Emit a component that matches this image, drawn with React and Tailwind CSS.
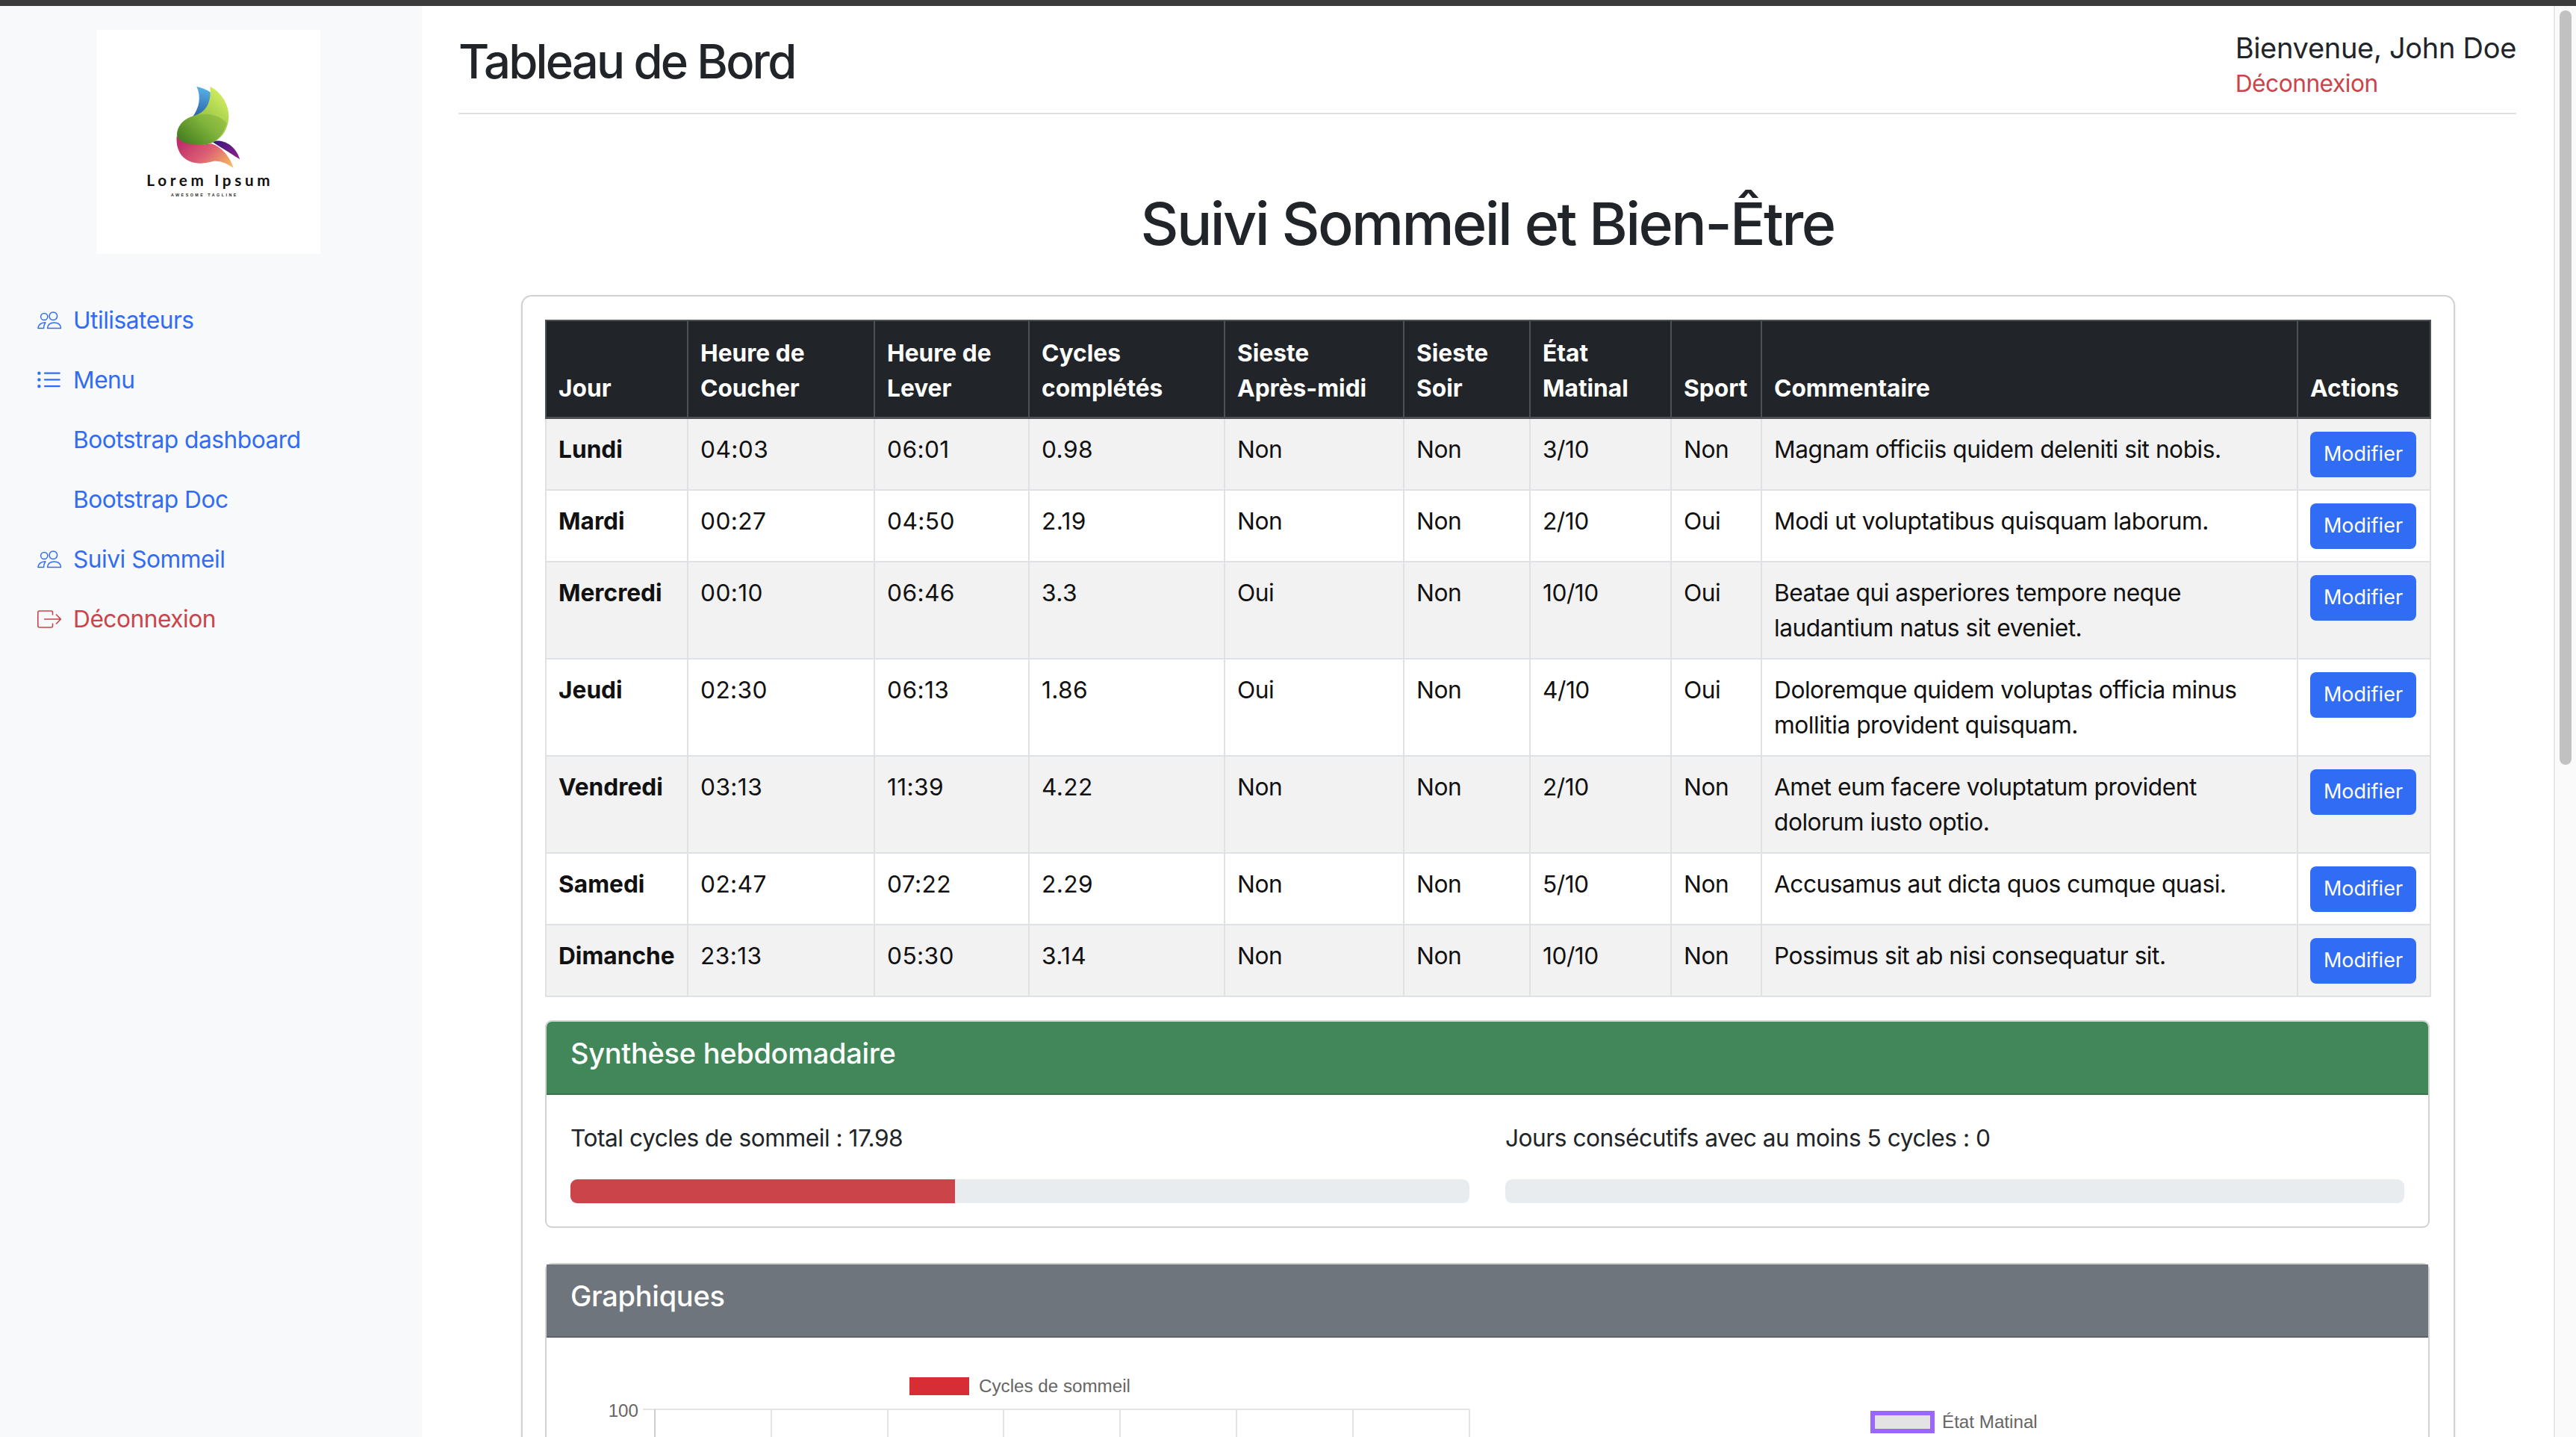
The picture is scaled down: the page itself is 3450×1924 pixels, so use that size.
import { BsListUl } from "react-icons/bs";

function PeopleIcon() {
  return (
    <svg viewBox="0 0 32 24" className="h-[24px] w-[32px]" fill="none" stroke="currentColor" strokeWidth="1.5">
      <circle cx="21.3" cy="6.2" r="5.3" />
      <circle cx="9.2" cy="7" r="4.6" />
      <path d="M13.6 22.6C14 17.6 17 15 22.6 15C28 15 31.2 17.6 31.6 22.6Z" strokeLinejoin="round" />
      <path d="M0.9 22.6C1.5 17.6 4.6 15 10.8 14.8C9.2 17 8.6 19.6 8.6 22.6Z" strokeLinejoin="round" />
    </svg>
  );
}

function LogoutIcon() {
  return (
    <svg viewBox="0 0 32 24" className="h-[24px] w-[32px]" fill="none" stroke="currentColor" strokeWidth="1.6">
      <path d="M20.5 6.5V3a2 2 0 0 0-2-2H2.8a2 2 0 0 0-2 2V21a2 2 0 0 0 2 2H18.500a2 2 0 0 0 2-2V17.500" />
      <path d="M9 12H31M25 5.500L31.300 12L25 18.500" />
    </svg>
  );
}

function ListIcon() {
  return <BsListUl size={35} className="-ml-[2px]" />;
}

const navItems = [
  { name: "Utilisateurs", icon: PeopleIcon },
  { name: "Menu", icon: ListIcon },
  { name: "Bootstrap dashboard" },
  { name: "Bootstrap Doc" },
  { name: "Suivi Sommeil", icon: PeopleIcon },
  { name: "Déconnexion", icon: LogoutIcon, danger: true },
];

const columns = [
  { label: ["Jour"], width: "w-[190px]" },
  { label: ["Heure de", "Coucher"], width: "w-[250px]" },
  { label: ["Heure de", "Lever"], width: "w-[207px]" },
  { label: ["Cycles", "complétés"], width: "w-[262px]" },
  { label: ["Sieste", "Après-midi"], width: "w-[240px]" },
  { label: ["Sieste", "Soir"], width: "w-[169px]" },
  { label: ["État", "Matinal"], width: "w-[189px]" },
  { label: ["Sport"], width: "w-[121px]" },
  { label: ["Commentaire"], width: "w-[718px]" },
  { label: ["Actions"], width: "w-[178px]" },
];

const rows = [
  ["Lundi", "04:03", "06:01", "0.98", "Non", "Non", "3/10", "Non", "Magnam officiis quidem deleniti sit nobis."],
  ["Mardi", "00:27", "04:50", "2.19", "Non", "Non", "2/10", "Oui", "Modi ut voluptatibus quisquam laborum."],
  ["Mercredi", "00:10", "06:46", "3.3", "Oui", "Non", "10/10", "Oui", "Beatae qui asperiores tempore neque laudantium natus sit eveniet."],
  ["Jeudi", "02:30", "06:13", "1.86", "Oui", "Non", "4/10", "Oui", "Doloremque quidem voluptas officia minus mollitia provident quisquam."],
  ["Vendredi", "03:13", "11:39", "4.22", "Non", "Non", "2/10", "Non", "Amet eum facere voluptatum provident dolorum iusto optio."],
  ["Samedi", "02:47", "07:22", "2.29", "Non", "Non", "5/10", "Non", "Accusamus aut dicta quos cumque quasi."],
  ["Dimanche", "23:13", "05:30", "3.14", "Non", "Non", "10/10", "Non", "Possimus sit ab nisi consequatur sit."],
];

function Logo() {
  return (
    <svg viewBox="27 30 900 900" className="h-[300px] w-[300px] bg-white">
      <defs>
        <linearGradient id="blue" x1="0.5" y1="0" x2="0.4" y2="1">
          <stop offset="0" stopColor="#5ab2e8" />
          <stop offset="1" stopColor="#2a62a6" />
        </linearGradient>
        <linearGradient id="green" x1="0.85" y1="0.1" x2="0.15" y2="0.95">
          <stop offset="0" stopColor="#d0ec60" />
          <stop offset="0.55" stopColor="#93c144" />
          <stop offset="1" stopColor="#477f22" />
        </linearGradient>
        <linearGradient id="pink" x1="0" y1="0.3" x2="1" y2="0.9">
          <stop offset="0" stopColor="#bf2d6b" />
          <stop offset="0.5" stopColor="#dd5f74" />
          <stop offset="1" stopColor="#f6bd5f" />
        </linearGradient>
        <linearGradient id="purple" x1="0" y1="0" x2="1" y2="1">
          <stop offset="0" stopColor="#35187c" />
          <stop offset="1" stopColor="#93208c" />
        </linearGradient>
      </defs>
      <path d="M430 258C450 262 472 270 487 282L484 335C465 362 440 372 413 380C440 345 450 300 430 258Z" fill="url(#blue)" />
      <path d="M490 478C535 468 585 490 604 550C575 532 550 515 520 497Z" fill="url(#purple)" />
      <path d="M350 457C375 485 440 495 490 487C530 500 565 540 578 585C545 560 510 550 480 562C440 572 395 565 370 535C352 510 348 485 350 457Z" fill="url(#pink)" />
      <path d="M484 258C530 280 560 330 559 380C556 440 520 480 470 490C420 495 365 490 351 455C350 415 380 385 420 375C470 360 490 320 484 258Z" fill="url(#green)" />
      <path d="M420 375C450 368 510 358 551 405C535 450 510 478 470 490C420 495 365 490 351 455C350 415 380 385 420 375Z" fill="#4c8a22" opacity="0.25" />
      <text x="229" y="656" fontFamily="Lato, sans-serif" fontWeight="700" fontSize="62" letterSpacing="14" fill="#111">Lorem Ipsum</text>
      <text x="327" y="698" fontFamily="'Liberation Sans', sans-serif" fontWeight="700" fontSize="16" letterSpacing="7.5" fill="#222">AWESOME TAGLINE</text>
    </svg>
  );
}

function Sidebar() {
  return (
    <aside className="h-full w-[565px] shrink-0 bg-[#f8f9fa]">
      <div className="pb-[49px] pl-[129px] pt-[32px]">
        <Logo />
      </div>
      <nav className="flex flex-col">
        {navItems.map((item) => (
          <a
            key={item.name}
            href="#"
            className={`flex h-[80px] items-center pl-[50px] text-[31.68px] tracking-[-0.48px] ${item.danger ? "text-[#cb444a]" : "text-[#316cf4]"}`}
          >
            <span className="flex w-[48px] shrink-0 items-center">{item.icon ? <item.icon /> : null}</span>
            {item.name}
          </a>
        ))}
      </nav>
    </aside>
  );
}

function cellClass(j) {
  if (j === 0) return "font-bold";
  if (j <= 3) return "tracking-[0.4px]";
  return "tracking-[-0.48px]";
}

function SleepTable() {
  return (
    <table className="w-[2524px] table-fixed border-collapse text-[31.68px] leading-[47.5px] text-[#111]">
      <colgroup>
        {columns.map((c) => (
          <col key={c.label.join(" ")} className={c.width} />
        ))}
      </colgroup>
      <thead className="bg-[#212529] text-white">
        <tr className="h-[130px]">
          {columns.map((c) => (
            <th key={c.label.join(" ")} className="border-2 border-b-[3px] border-[#4d5154] px-[16px] pb-[14px] pt-[15px] text-left align-bottom font-bold">
              {c.label.map((line) => (
                <div key={line}>{line}</div>
              ))}
            </th>
          ))}
        </tr>
      </thead>
      <tbody>
        {rows.map((row, i) => (
          <tr key={row[0]} className={i % 2 === 0 ? "bg-[#f2f2f2]" : "bg-white"}>
            {row.map((cell, j) => (
              <td key={j} className={`border-2 border-[#dee2e6] px-[16px] pb-[16px] pt-[17px] align-top ${cellClass(j)}`}>
                {cell}
              </td>
            ))}
            <td className="border-2 border-[#dee2e6] px-[16px] pb-[16px] pt-[17px] align-top">
              <button className="flex h-[61px] w-[142px] items-center justify-center rounded-[8px] bg-[#316cf4] text-[27px] text-white">
                Modifier
              </button>
            </td>
          </tr>
        ))}
      </tbody>
    </table>
  );
}

function Progress({ percent, label }) {
  return (
    <div className="w-[1204px]">
      <p className="flex h-[48px] items-center text-[31.68px] tracking-[-0.48px] text-[#212529]">{label}</p>
      <div className="mt-[31px] h-[32px] overflow-hidden rounded-[9px] bg-[#e9ecef]">
        <div className="h-full bg-[#cb444a]" style={{ width: `${percent}%` }} />
      </div>
    </div>
  );
}

function Summary() {
  return (
    <section className="mt-[31px] overflow-hidden rounded-[9px] border-2 border-[#d2d2d2]">
      <h4 className="flex h-[98px] items-center border-b-2 border-[#38734d] bg-[#41875a] px-[32px] pb-[10px] text-[38px] font-medium tracking-[-0.3px] text-white">
        Synthèse hebdomadaire
      </h4>
      <div className="flex gap-[48px] px-[32px] pb-[31px] pt-[34px]">
        <Progress percent={42.8} label="Total cycles de sommeil : 17.98" />
        <Progress percent={0} label="Jours consécutifs avec au moins 5 cycles : 0" />
      </div>
    </section>
  );
}

function LineChartPreview() {
  const lines = [878, 1034, 1190, 1345, 1501, 1657, 1813, 1969];
  return (
    <svg viewBox="765 1791 2456 200" className="block h-[200px] w-[2456px]">
      <rect x="1219" y="1844" width="80" height="24" fill="#d92d35" />
      <text x="1312" y="1864" fontFamily="'Liberation Sans', sans-serif" fontSize="24.2" fill="#666">Cycles de sommeil</text>
      <text x="856" y="1897" textAnchor="end" fontFamily="'Liberation Sans', sans-serif" fontSize="24.2" fill="#666">100</text>
      <line x1="862" y1="1887" x2="1969" y2="1887" stroke="#e4e4e4" strokeWidth="2" />
      {lines.map((x) => (
        <line key={x} x1={x} y1="1887" x2={x} y2="1991" stroke={x === 878 ? "#cfcfcf" : "#e4e4e4"} strokeWidth="2" />
      ))}
      <rect x="2509" y="1892" width="80" height="24" fill="#e3e3e3" stroke="#9966ff" strokeWidth="6" />
      <text x="2602" y="1912" fontFamily="'Liberation Sans', sans-serif" fontSize="24.2" fill="#666">État Matinal</text>
    </svg>
  );
}

function Charts() {
  return (
    <section className="mt-[47px] rounded-t-[9px] border-x-2 border-t-2 border-[#d2d2d2]">
      <h4 className="flex h-[98px] items-center border-b-2 border-[#5c6268] bg-[#6e757c] px-[32px] pb-[10px] text-[38px] font-medium tracking-[-0.3px] text-white">
        Graphiques
      </h4>
      <div className="px-[32px]">
        <LineChartPreview />
      </div>
    </section>
  );
}

export default function App() {
  return (
    <div className="flex h-[1924px] w-[3450px] flex-col overflow-hidden bg-white font-['Inter',sans-serif] text-[#212529]">
      <div className="h-[8px] shrink-0 bg-[#3b3b3b]" />
      <div className="flex min-h-0 flex-1">
        <Sidebar />
        <main className="min-w-0 flex-1 pl-[49px] pr-[50px]">
          <header className="flex h-[145px] justify-between border-b-2 border-[#dee2e6]">
            <h2 className="pt-[37px] text-[63.4px] font-medium leading-[74px] tracking-[-2.8px]">Tableau de Bord</h2>
            <div className="pt-[32px]">
              <div className="text-[38px] leading-[48px] tracking-[-0.3px]">Bienvenue, John Doe</div>
              <a href="#" className="block text-[31.68px] leading-[48px] tracking-[-0.48px] text-[#cb444a]">Déconnexion</a>
            </div>
          </header>
          <h1 className="mt-[100px] text-center text-[79px] font-medium leading-[92px] tracking-[-2.65px]">Suivi Sommeil et Bien-Être</h1>
          <div className="ml-[84px] mr-[82px] mt-[50px] rounded-t-[14px] border-x-2 border-t-2 border-[#d2d2d2] pl-[30px] pr-[32px] pt-[31px] shadow-sm">
            <SleepTable />
            <Summary />
            <Charts />
          </div>
        </main>
        <div className="w-[30px] shrink-0 border-l-2 border-[#e8e8e8] bg-[#fafafa] pl-[6px] pt-[6px]">
          <div className="h-[1010px] w-[16px] rounded-full bg-[#c1c1c1]" />
        </div>
      </div>
    </div>
  );
}
